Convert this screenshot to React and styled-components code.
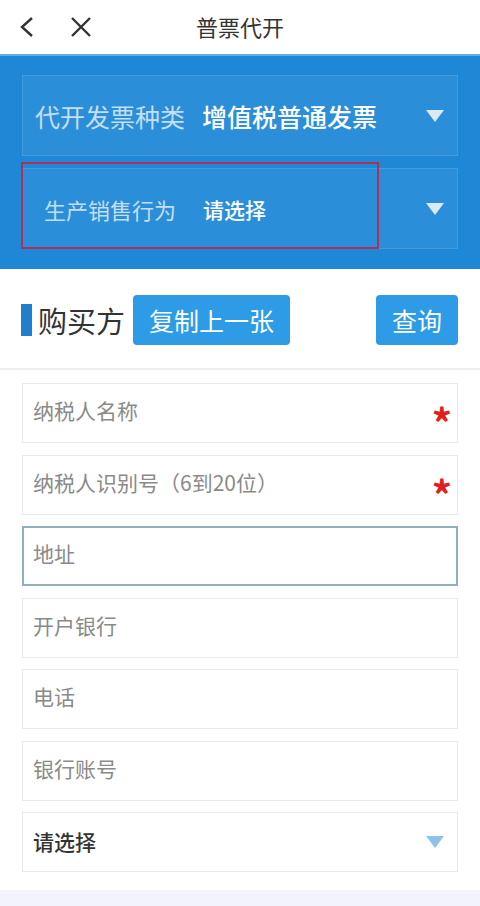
import React from 'react';
import styled, { createGlobalStyle } from 'styled-components';

const GlobalStyle = createGlobalStyle`
  html, body {
    margin: 0;
    padding: 0;
    background: #ffffff;
    font-family: "Noto Sans CJK SC", "Noto Sans", sans-serif;
  }
  * { box-sizing: border-box; }
`;

const Page = styled.div`
  width: 480px;
  min-height: 906px;
  display: flex;
  flex-direction: column;
  background: #ffffff;
`;

const NavBar = styled.div`
  height: 54px;
  display: grid;
  grid-template-columns: 120px 1fr 120px;
  align-items: center;
  background: #ffffff;
`;

const NavIcons = styled.div`
  display: flex;
  align-items: center;
  gap: 34px;
  padding-left: 18px;
`;

const NavTitle = styled.div`
  text-align: center;
  font-size: 22px;
  color: #333333;
  margin-top: -2px;
`;

const BluePanel = styled.div`
  background: #1e87d6;
  border-top: 2px solid #5fb0e8;
  padding: 19px 22px 20px;
  display: flex;
  flex-direction: column;
  gap: 12px;
`;

const SelectBox = styled.div`
  position: relative;
  height: 81px;
  display: flex;
  align-items: center;
  padding: 0 12px 0 ${p => p.$indent}px;
  background: rgba(255, 255, 255, 0.06);
  border: 1px solid rgba(255, 255, 255, 0.12);
`;

const SelectLabel = styled.span`
  color: rgba(255, 255, 255, 0.72);
  font-size: ${p => p.$size}px;
  width: ${p => p.$width}px;
  flex-shrink: 0;
`;

const SelectValue = styled.span`
  flex: 1;
  color: #ffffff;
  font-size: ${p => p.$size}px;
  font-weight: 500;
`;

const Highlight = styled.div`
  position: absolute;
  left: -2px;
  top: -7px;
  width: 358px;
  bottom: -1px;
  border: 2px solid #b0305a;
  pointer-events: none;
`;

const SectionHeader = styled.div`
  display: flex;
  align-items: center;
  padding: 26px 22px 23px 21px;
  border-bottom: 2px solid #efefef;
`;

const SectionTitle = styled.div`
  display: flex;
  align-items: center;
  font-size: 29px;
  color: #333333;
  margin-right: 8px;

  &::before {
    content: '';
    display: block;
    width: 11px;
    height: 32px;
    background: #1f7fcc;
    margin-right: 6px;
  }
`;

const ActionButton = styled.button`
  height: 50px;
  padding: 0 ${p => p.$pad}px;
  border: none;
  border-radius: 4px;
  background: #2e9be6;
  color: #ffffff;
  font-family: inherit;
  font-size: 25px;
  margin-left: ${p => (p.$push ? 'auto' : '0')};
`;

const FieldList = styled.div`
  display: flex;
  flex-direction: column;
  gap: 11.5px;
  padding: 13px 22px 18px;
`;

const Field = styled.div`
  height: 60px;
  display: flex;
  align-items: center;
  justify-content: space-between;
  padding: 0 12px 0 10px;
  background: #ffffff;
  border: ${p => (p.$focused ? '2px solid #8fb0b8' : '1px solid #e9e9e9')};
  padding-left: ${p => (p.$focused ? 9 : 10)}px;
`;

const FieldText = styled.span`
  font-size: 21px;
  color: ${p => (p.$filled ? '#333333' : '#8a8a8a')};
  font-weight: ${p => (p.$filled ? 500 : 400)};
  margin-top: ${p => (p.$filled ? '-2px' : '-6px')};
`;

const Required = styled.span`
  color: #e02020;
  font-size: 40px;
  font-weight: 700;
  line-height: 1;
  margin-top: 18px;
  margin-right: -7px;
`;

const Footer = styled.div`
  flex: 1;
  min-height: 17px;
  background: #f3f3fb;
`;

const Triangle = ({ color }) => (
  <svg width="20" height="14" viewBox="0 0 20 14">
    <path d="M1 1 L19 1 L10 13 Z" fill={color} />
  </svg>
);

const BackIcon = () => (
  <svg width="18" height="24" viewBox="0 0 18 24">
    <path d="M14 3 L4 12 L14 21" fill="none" stroke="#333" strokeWidth="2.4" />
  </svg>
);

const CloseIcon = () => (
  <svg width="22" height="22" viewBox="0 0 22 22">
    <path d="M2 2 L20 20 M20 2 L2 20" fill="none" stroke="#333" strokeWidth="2.4" />
  </svg>
);

const fields = [
  { text: '纳税人名称', required: true },
  { text: '纳税人识别号（6到20位）', required: true },
  { text: '地址', focused: true },
  { text: '开户银行' },
  { text: '电话' },
  { text: '银行账号' },
];

export default function App() {
  return (
    <Page>
      <GlobalStyle />
      <NavBar>
        <NavIcons>
          <BackIcon />
          <CloseIcon />
        </NavIcons>
        <NavTitle>普票代开</NavTitle>
        <div />
      </NavBar>

      <BluePanel>
        <SelectBox $indent={12}>
          <SelectLabel $size={25} $width={167}>代开发票种类</SelectLabel>
          <SelectValue $size={25}>增值税普通发票</SelectValue>
          <Triangle color="#dbeaf7" />
        </SelectBox>
        <SelectBox $indent={21}>
          <SelectLabel $size={22} $width={159}>生产销售行为</SelectLabel>
          <SelectValue $size={21}>请选择</SelectValue>
          <Triangle color="#dbeaf7" />
          <Highlight />
        </SelectBox>
      </BluePanel>

      <SectionHeader>
        <SectionTitle>购买方</SectionTitle>
        <ActionButton $pad={16}>复制上一张</ActionButton>
        <ActionButton $pad={16} $push>查询</ActionButton>
      </SectionHeader>

      <FieldList>
        {fields.map(f => (
          <Field key={f.text} $focused={f.focused}>
            <FieldText>{f.text}</FieldText>
            {f.required && <Required>*</Required>}
          </Field>
        ))}
        <Field>
          <FieldText $filled>请选择</FieldText>
          <Triangle color="#8ec3e8" />
        </Field>
      </FieldList>

      <Footer />
    </Page>
  );
}
